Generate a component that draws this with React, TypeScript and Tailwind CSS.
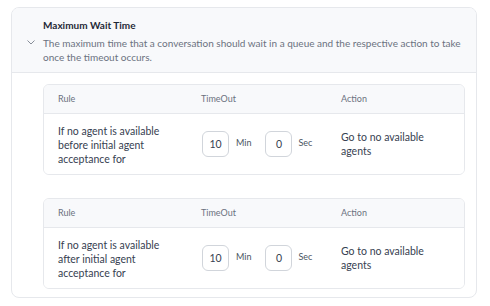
import React from 'react'

const rows = [
  { rule: ['If no agent is available', 'before initial agent', 'acceptance for'], min: '10', sec: '0' },
  { rule: ['If no agent is available', 'after initial agent', 'acceptance for'], min: '10', sec: '0' },
]

function RuleCard({ rule, min, sec }: { rule: string[]; min: string; sec: string }) {
  return (
    <div className="rounded-md border border-[#e6e8ec] overflow-hidden">
      <div className="grid grid-cols-[143px_140px_1fr] pl-[14px] h-[29px] items-center bg-[#f8f9fb] border-b border-[#e6e8ec] text-[9px] text-[#6b7280]">
        <span>Rule</span>
        <span>TimeOut</span>
        <span>Action</span>
      </div>
      <div className="grid grid-cols-[143px_140px_1fr] pl-[14px] h-[60px] items-center bg-white text-[10.5px] text-[#374151] leading-[14px]">
        <div className="pt-px">
          {rule.map((l) => (
            <div key={l}>{l}</div>
          ))}
        </div>
        <div className="flex items-center pl-px">
          <div className="w-[27px] h-[26px] border border-[#d1d5db] rounded-md flex items-center justify-center text-[10.5px] text-[#374151]">
            {min}
          </div>
          <span className="ml-[7px] mr-[14px] text-[9px] text-[#4b5563] -mt-[3px]">Min</span>
          <div className="w-[27px] h-[26px] border border-[#d1d5db] rounded-md flex items-center justify-center text-[10.5px] text-[#374151]">
            {sec}
          </div>
          <span className="ml-[6px] text-[9px] text-[#4b5563] -mt-[3px]">Sec</span>
        </div>
        <div>
          <div>Go to no available</div>
          <div>agents</div>
        </div>
      </div>
    </div>
  )
}

export default function App() {
  return (
    <div className="w-[490px] h-[306px] bg-white pt-[7px] pl-[11px]" style={{ fontFamily: 'Lato, "Noto Sans", sans-serif' }}>
      <div className="w-[466px] h-[291px] rounded-lg border border-[#e6e8ec] overflow-hidden">
        <div className="h-[65px] bg-[#f8f9fb] border-b border-[#e6e8ec] relative pl-[31px] pt-[10px]">
          <svg className="absolute left-[15px] top-[32px]" width="8" height="5" viewBox="0 0 8 5" fill="none">
            <path d="M0.5 0.5L4 4L7.5 0.5" stroke="#6b7280" strokeWidth="0.8" />
          </svg>
          <div className="text-[10px] font-bold text-[#1f2937] leading-[14px]">Maximum Wait Time</div>
          <div className="mt-[4px] text-[10px] text-[#6b7280] leading-[14px] whitespace-nowrap">
            The maximum time that a conversation should wait in a queue and the respective action to take
            <br />
            once the timeout occurs.
          </div>
        </div>
        <div className="pt-[11px] pl-[31px] pr-[11px] flex flex-col gap-[23px]">
          {rows.map((r, i) => (
            <RuleCard key={i} {...r} />
          ))}
        </div>
      </div>
    </div>
  )
}
